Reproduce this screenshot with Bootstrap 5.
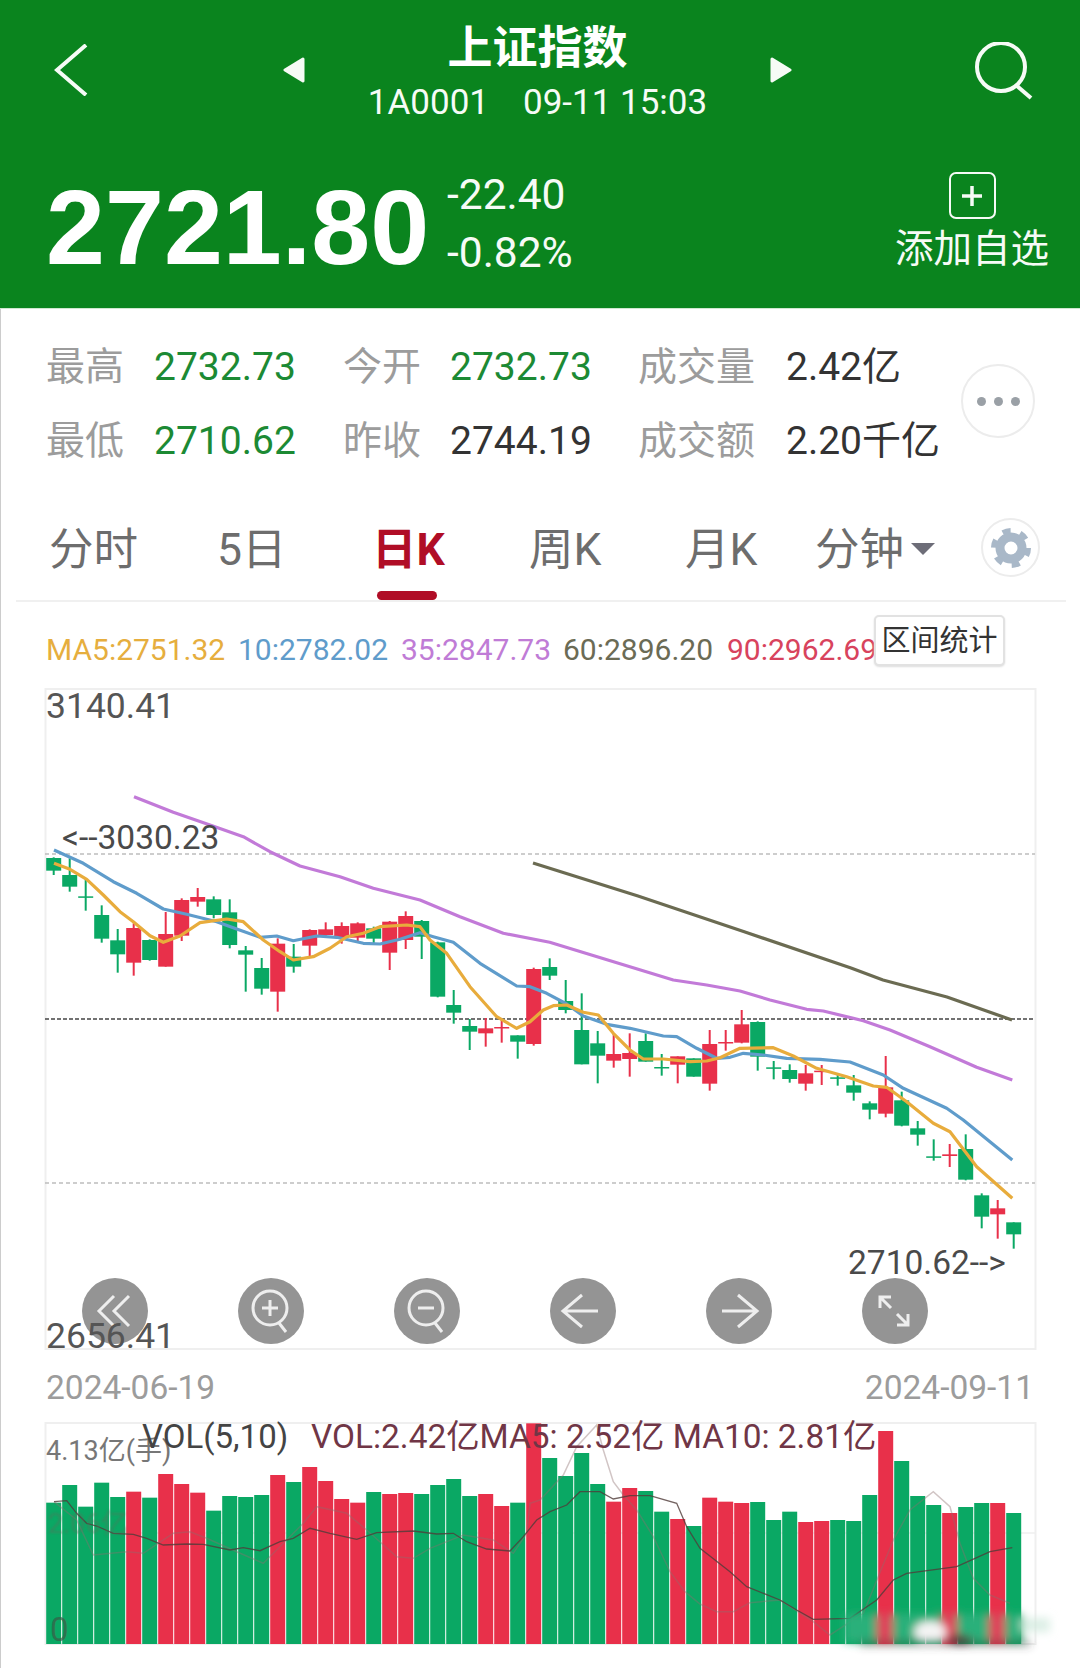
<!DOCTYPE html>
<html lang="zh-CN">
<head>
  <meta charset="UTF-8">
  <meta name="viewport" content="width=device-width, initial-scale=1.0">
  <title>上证指数</title>
  <link href="https://cdn.jsdelivr.net/npm/bootstrap@5.3.3/dist/css/bootstrap.min.css" rel="stylesheet">
  <script src="https://cdn.jsdelivr.net/npm/bootstrap@5.3.3/dist/js/bootstrap.bundle.min.js"></script>
  <style>
    html, body { height: 1668px; overflow: hidden; }
    body { font-family: Roboto, "Noto Sans CJK SC", sans-serif; background: #fff; color: #333; }
    .stock-head { height: 309px; background: #0a841e; color: #f6fbf6; border-bottom: 1px solid #cfe8d0; }
    .head-top { height: 130px; padding-left: 54px; }
    .back-icon { margin-top: 44px; }
    .head-title { width: 511px; margin-left: 190px; }
    .tri-icon { margin-top: 57px; }
    .search-icon { margin: 42px 0 0 182px; }
    .title-main { font-size: 45px; font-weight: 700; line-height: 50px; margin-top: 24px; color: #fff; }
    .title-sub { font-size: 35px; line-height: 40px; margin-top: 9px; }
    .title-sub span + span { margin-left: 34px; }
    .head-price { padding: 45px 30px 0 46px; }
    .big-price { font-family: "Liberation Sans", sans-serif; font-size: 106px; font-weight: 700; line-height: 110px; width: 401px; margin-top: -3px; color: #fff; }
    .price-change { font-size: 42.5px; line-height: 58px; margin-top: -9px; }
    .add-fav { width: 156px; font-size: 38.5px; line-height: 44px; margin-top: -3px; }
    .add-box { width: 47px; height: 47px; border: 2px solid #f6fbf6; border-radius: 7px; margin-bottom: 8px; }
    .body-wrap { border-left: 1px solid #ccc; height: 1359px; }
    .stat-panel { height: 171px; padding: 21px 0 0 45px; }
    .stat-grid { display: grid; grid-template-columns: 108px 189px 107px 188px 148px auto; grid-auto-rows: 74px; align-items: center; font-size: 39px; white-space: nowrap; }
    .stat-label { color: #9c9c9c; }
    .stat-up { color: #1c8a34; }
    .stat-dark { color: #333; }
    .more-btn { width: 74px; height: 74px; top: 55px; right: 45px; border: 2px solid #ececec; }
    .more-btn i { width: 9px; height: 9px; background: #9aa0a6; }
    .tab-strip { height: 122px; margin: 0 14px 0 15px; border-bottom: 2px solid #f0f0f0; }
    .tab-grid { display: grid; grid-template-columns: 168px 155px 157px 156px 130px 1fr; padding: 43px 0 0 33px; font-size: 44.5px; line-height: 54px; color: #6d6d6d; }
    .tab-on { color: #b00d26; font-weight: 700; }
    .tab-on::after { content: ""; position: absolute; left: 5px; top: 68px; width: 60px; height: 9px; border-radius: 5px; background: #b00d26; }
    .tab-drop { display: inline-block; margin: 0 0 9px 7px; border-left: 12px solid transparent; border-right: 12px solid transparent; border-top: 12px solid #6d6d78; vertical-align: middle; }
    .gear-btn { width: 59px; height: 59px; top: 38px; right: 26px; border: 2px solid #ececec; }
    .ma-row { height: 78px; padding-left: 45px; font-size: 30px; line-height: 36px; }
    .ma-line { padding-top: 30px; white-space: nowrap; width: 829px; overflow: hidden; }
    .ma-line span { display: inline-block; }
    .ma-a { color: #e6ae3e; width: 192px; }
    .ma-b { color: #5f9ccb; width: 163px; }
    .ma-c { color: #c07cd6; width: 162px; }
    .ma-d { color: #6b6b55; width: 164px; }
    .ma-e { color: #d8435d; }
    .range-btn { top: 13px; left: 873px; width: 131px; height: 51px; border: 2px solid #e2e2e2; border-radius: 5px; font-size: 29px; line-height: 44px; color: #333; background: #fff; box-shadow: 0 1px 2px #ddd; padding: 0; }
    .chart-wrap { height: 675px; }
    .chart-wrap svg, .vol-wrap svg { display: block; margin-left: -1px; }
    .chart-tag { position: absolute; line-height: 1; white-space: nowrap; color: #4a4a4a; font-size: 33.5px; }
    .tag-max { left: 45px; top: 9px; font-size: 35.5px; color: #555; }
    .tag-high { left: 61px; top: 141px; }
    .tag-low { left: 847px; top: 566px; }
    .tag-min { left: 45px; top: 639px; font-size: 35.5px; color: #555; }
    .zoom-bar { position: absolute; left: 81px; top: 598px; width: 846px; }
    .zoom-btn { width: 66px; height: 66px; padding: 0; border: 0; background: #949494; }
    .date-row { height: 60px; padding: 15px 46px 0 45px; font-size: 33.5px; line-height: 36px; color: #9c9c9c; }
    .vol-wrap { height: 253px; }
    .vol-name { left: 141px; top: 5px; font-size: 33px; color: #444; }
    .vol-val { left: 310px; top: 5px; font-size: 33.4px; color: #703646; }
    .vol-max { left: 45px; top: 23px; font-size: 27px; color: #777; }
    .vol-mid { left: 47px; top: 96px; font-size: 27px; color: rgba(90,110,90,.45); filter: blur(1px); }
    .vol-zero { left: 49px; top: 198px; font-size: 33px; color: rgba(60,90,70,.7); }
  </style>
</head>
<body>
  <div class="stock-head">
    <div class="head-top d-flex align-items-start">
      <svg class="back-icon" width="38" height="52" viewBox="0 0 38 52" fill="none" stroke="#f6fbf6" stroke-width="4"><path d="M32 1 L3 26 L32 51"/></svg>
      <div class="head-title d-flex justify-content-between">
        <svg class="tri-icon" width="24" height="26" viewBox="0 0 24 26"><path d="M21 2 L3 13 L21 24 Z" fill="#f6fbf6" stroke="#f6fbf6" stroke-width="3" stroke-linejoin="round"/></svg>
        <div class="text-center">
          <div class="title-main">上证指数</div>
          <div class="title-sub"><span>1A0001</span><span>09-11 15:03</span></div>
        </div>
        <svg class="tri-icon" width="24" height="26" viewBox="0 0 24 26"><path d="M3 2 L21 13 L3 24 Z" fill="#f6fbf6" stroke="#f6fbf6" stroke-width="3" stroke-linejoin="round"/></svg>
      </div>
      <svg class="search-icon" width="60" height="60" viewBox="0 0 60 60" fill="none" stroke="#f6fbf6" stroke-width="4"><circle cx="26" cy="25" r="24"/><path d="M42 44 L56 56"/></svg>
    </div>
    <div class="head-price d-flex align-items-start">
      <div class="big-price">2721.80</div>
      <div class="price-change flex-grow-1">
        <div>-22.40</div>
        <div>-0.82%</div>
      </div>
      <div class="add-fav d-flex flex-column align-items-center">
        <div class="add-box d-flex align-items-center justify-content-center">
          <svg width="24" height="24" viewBox="0 0 24 24" stroke="#f6fbf6" stroke-width="3.5"><path d="M12 2 V22 M2 12 H22"/></svg>
        </div>
        <div>添加自选</div>
      </div>
    </div>
  </div>

  <div class="body-wrap">
    <div class="stat-panel position-relative">
      <div class="stat-grid">
        <span class="stat-label">最高</span><span class="stat-up">2732.73</span>
        <span class="stat-label">今开</span><span class="stat-up">2732.73</span>
        <span class="stat-label">成交量</span><span class="stat-dark">2.42亿</span>
        <span class="stat-label">最低</span><span class="stat-up">2710.62</span>
        <span class="stat-label">昨收</span><span class="stat-dark">2744.19</span>
        <span class="stat-label">成交额</span><span class="stat-dark">2.20千亿</span>
      </div>
      <div class="more-btn position-absolute rounded-circle d-flex align-items-center justify-content-center gap-2">
        <i class="rounded-circle"></i><i class="rounded-circle"></i><i class="rounded-circle"></i>
      </div>
    </div>

    <div class="tab-strip position-relative">
      <div class="tab-grid">
        <div>分时</div>
        <div>5日</div>
        <div class="tab-on position-relative">日K</div>
        <div>周K</div>
        <div>月K</div>
        <div>分钟<span class="tab-drop"></span></div>
      </div>
      <div class="gear-btn position-absolute rounded-circle d-flex align-items-center justify-content-center">
        <svg width="42" height="42" viewBox="0 0 42 42" fill="none" stroke="#a9b8c8"><circle cx="21" cy="21" r="11" stroke-width="9"/><circle cx="21" cy="21" r="17" stroke-width="6" stroke-dasharray="8 9.8"/></svg>
      </div>
    </div>

    <div class="ma-row position-relative">
      <div class="ma-line">
        <span class="ma-a">MA5:2751.32</span><span class="ma-b">10:2782.02</span><span class="ma-c">35:2847.73</span><span class="ma-d">60:2896.20</span><span class="ma-e">90:2962.69</span>
      </div>
      <button type="button" class="range-btn btn position-absolute">区间统计</button>
    </div>

    <div class="chart-wrap position-relative">
      <svg id="kline" width="1080" height="675" viewBox="0 680 1080 675"></svg>
      <span class="chart-tag tag-max">3140.41</span>
      <span class="chart-tag tag-high">&lt;--3030.23</span>
      <span class="chart-tag tag-low">2710.62--&gt;</span>
      <div class="zoom-bar d-flex justify-content-between" id="zoom-bar"></div>
      <span class="chart-tag tag-min">2656.41</span>
    </div>

    <div class="date-row d-flex justify-content-between">
      <span>2024-06-19</span>
      <span>2024-09-11</span>
    </div>

    <div class="vol-wrap position-relative">
      <svg id="volume" width="1080" height="253" viewBox="0 1415 1080 253"></svg>
      <span class="chart-tag vol-max">4.13亿(手)</span>
      <span class="chart-tag vol-name">VOL(5,10)</span>
      <span class="chart-tag vol-val">VOL:2.42亿MA5: 2.52亿 MA10: 2.81亿</span>
      <span class="chart-tag vol-mid">2.06亿</span>
      <span class="chart-tag vol-zero">0</span>
    </div>
  </div>

  <script>
    const GREEN = '#0aa864', RED = '#e8304a';
    // c, body top, body bottom, wick top, wick bottom (measured from the crops)
    const left = [
      ['G',234,272,232,285],['G',285,320,235,335],['G',349,352,295,392],['G',405,476,376,488],['G',481,523,447,578],
      ['R',444,548,430,587],['G',480,540,478,542],['R',462,560,396,560],['R',360,467,355,483],['R',351,365,324,380],
      ['G',358,405,349,415],['G',397,495,358,505],['G',511,524,498,635],['G',564,626,534,644],['R',491,635,475,695],
      ['G',530,560,492,578],['R',450,497,448,530],['R',448,465,427,470],['R',438,473,427,491],['R',430,473,427,485],
      ['G',445,476,440,490],['R',425,518,423,570],['R',408,480,394,507],['G',423,470,420,537],['G',487,650,485,652],
      ['G',675,698,630,731],['G',738,755,717,810],['R',745,760,714,800],['R',741,745,718,788],['G',766,785,766,836],
      ['R',567,792,563,797],['G',561,587,535,600]
    ];
    const right = [
      ['G',63,90,0,100],['G',150,253,40,253],['G',190,227,153,310],['R',222,242,160,263],['R',219,237,160,290],
      ['G',183,245,160,245],['G',261,264,222,287],['R',229,254,229,310],['G',235,290,235,290],['R',192,311,150,332],
      ['R',186,188,150,212],['R',133,188,90,190],['G',126,230,124,272],['G',262,265,243,298],['G',270,297,253,308],
      ['R',280,311,255,332],['R',272,275,255,315],['G',292,295,280,317],['G',316,338,285,362],['G',370,389,364,418],
      ['R',322,401,228,412],['G',361,437,335,439],['G',445,464,423,497],['G',529,532,478,542],['R',523,528,492,561],
      ['G',507,599,463,601],['G',646,710,640,745],['R',685,703,660,776],['G',727,763,727,806]
    ];
    const candles = left.map(c => [c[0], ...c.slice(1).map(v => 780 + v / 3)])
      .concat(right.map(c => [c[0], ...c.slice(1).map(v => 980 + v / 3)]));
    const volTops = [308,255,320,248,291,275,293,222,252,278,332,288,291,285,225,246,201,243,297,308,276,282,279,282,255,237,288,282,318,308,70,174,
      228,159,252,305,264,273,335,357,378,293,305,309,306,360,335,366,363,360,363,285,93,183,288,315,339,321,309,309,339];
    const barX = i => 53.7 + i * 16;

    const toPts = (a, b) => a.map(p => (30 + p[0] / 3).toFixed(1) + ',' + (780 + p[1] / 3).toFixed(1))
      .concat(b.map(p => (530 + p[0] / 3).toFixed(1) + ',' + (980 + p[1] / 3).toFixed(1))).join(' ');
    const blue = toPts([[72,210],[160,250],[250,305],[320,340],[400,387],[470,403],[560,425],[620,447],[690,472],[740,468],[790,482],[860,468],[920,472],[1000,490],[1050,492],[1110,478],[1170,458],[1210,470],[1270,487],[1350,550],[1460,618]],
      [[0,20],[50,40],[110,72],[160,108],[230,133],[300,145],[400,168],[440,170],[500,205],[560,235],[600,232],[640,220],[700,225],[770,235],[870,238],[960,246],[1060,285],[1120,325],[1250,385],[1300,420],[1447,540]]);
    const orange = toPts([[72,250],[120,268],[170,298],[220,345],[270,395],[310,425],[360,467],[400,487],[450,468],[510,428],[590,417],[640,425],[700,480],[750,515],[790,540],[850,530],[900,505],[950,470],[1000,460],[1050,440],[1130,435],[1170,440],[1200,480],[1250,520],[1320,620],[1400,710],[1460,745]],
      [[0,125],[40,90],[70,77],[110,75],[160,97],[205,105],[250,160],[300,210],[340,237],[400,237],[480,245],[530,243],[570,233],[630,205],[730,203],[790,228],[860,265],[950,290],[1030,318],[1070,322],[1130,365],[1210,430],[1260,455],[1340,560],[1447,655]]);
    const purple = toPts([[312,50],[430,97],[540,135],[640,170],[720,215],[810,258],[930,290],[1030,325],[1170,360],[1290,410],[1420,460],[1559,487]],
      [[430,0],[530,15],[630,33],[720,60],[830,88],[880,93],[1000,122],[1080,150],[1200,200],[1340,262],[1447,300]]);
    const olive = '533,863 638,896 745,932 851,968 883,980 947,997 1012,1020';

    let k = '';
    k += '<path d="M45.5 689 H1035.5 V1349 H45.5 Z" fill="none" stroke="#efefef" stroke-width="2"/>';
    k += '<path d="M45 854 H1035 M45 1183 H1035" stroke="#bdbdbd" stroke-width="1.5" stroke-dasharray="4 3"/>';
    k += '<path d="M45 1019 H1035" stroke="#444" stroke-width="1.5" stroke-dasharray="4 2"/>';
    candles.forEach((c, i) => {
      const x = barX(i), col = c[0] === 'G' ? GREEN : RED;
      k += `<path d="M${x} ${c[3]} V${c[4]}" stroke="${col}" stroke-width="2"/>`;
      k += `<rect x="${x - 7.5}" y="${c[1]}" width="15" height="${Math.max(c[2] - c[1], 1.5)}" fill="${col}"/>`;
    });
    [[purple, '#c27ad8'], [olive, '#6b6b52'], [blue, '#5f9ccb'], [orange, '#e8ac3c']].forEach(l => {
      k += `<polyline points="${l[0]}" fill="none" stroke="${l[1]}" stroke-width="3.2" stroke-linejoin="round"/>`;
    });
    document.getElementById('kline').innerHTML = k;

    const toVol = (a, b) => a.map(p => (30 + p[0] / 3).toFixed(1) + ',' + (1400 + p[1] / 3).toFixed(1))
      .concat(b.map(p => (530 + p[0] / 3).toFixed(1) + ',' + (1400 + p[1] / 3).toFixed(1))).join(' ');
    const volDark = toVol([[72,305],[110,302],[140,340],[170,370],[200,378],[250,400],[310,403],[350,415],[400,435],[470,432],[520,433],[600,450],[640,443],[690,452],[750,425],[790,415],[840,385],[900,400],[980,418],[1040,398],[1150,393],[1220,402],[1270,400],[1310,425],[1370,447],[1440,453],[1480,410]],
      [[0,385],[20,360],[60,335],[110,315],[150,275],[210,275],[250,297],[300,287],[360,287],[440,310],[470,380],[510,445],[600,515],[650,560],[750,600],[800,630],[850,658],[960,655],[1040,600],[1090,540],[1130,520],[1280,500],[1380,455],[1447,443]]);
    const volFaint = toVol([[72,305],[140,360],[190,465],[290,455],[340,460],[430,400],[480,395],[530,415],[620,455],[700,490],[820,370],[860,320],[950,340],[1010,390],[1100,470],[1150,475],[1200,445],[1300,405],[1390,420],[1450,460],[1490,400]],
      [[0,310],[30,300],[100,225],[140,140],[200,75],[220,150],[250,245],[280,285],[320,330],[370,410],[420,515],[465,575],[510,612],[560,635],[610,635],[660,608],[750,600],[850,665],[900,705],[1000,640],[1090,420],[1140,330],[1210,275],[1260,320],[1290,430],[1330,535],[1380,585],[1440,610]]);

    let v = '<defs><filter id="smear" x="-20%" y="-80%" width="140%" height="260%"><feGaussianBlur stdDeviation="4"/></filter></defs>';
    v += '<path d="M45.5 1423 H1035.5 V1644 H45.5 Z" fill="none" stroke="#efefef" stroke-width="2"/>';
    v += '<path d="M45 1533 H1035" stroke="#efefef" stroke-width="1.5"/>';
    volTops.forEach((t, i) => {
      const top = 1400 + t / 3;
      v += `<rect x="${barX(i) - 7.5}" y="${top}" width="15" height="${1644 - top}" fill="${candles[i][0] === 'G' ? GREEN : RED}"/>`;
    });
    v += `<polyline points="${volFaint}" fill="none" stroke="rgba(140,110,110,.4)" stroke-width="1.5"/>`;
    v += `<polyline points="${volDark}" fill="none" stroke="rgba(80,60,58,.8)" stroke-width="1.3"/>`;
    // blurred-out watermark at the bottom right: bars smeared, a few pale and dark patches
    v += '<g filter="url(#smear)">';
    candles.forEach((c, i) => {
      if (i > 49) v += `<rect x="${barX(i) - 9}" y="1614" width="18" height="28" fill="${c[0] === 'G' ? '#2bb07a' : '#e0405a'}"/>`;
    });
    v += '<rect x="1020" y="1618" width="30" height="14" fill="#cfe8dc" opacity=".7"/><ellipse cx="930" cy="1632" rx="16" ry="11" fill="#f4f4f4"/><ellipse cx="960" cy="1640" rx="12" ry="5" fill="#553a3a"/><rect x="860" y="1640" width="170" height="6" fill="#444" opacity=".5"/></g>';
    document.getElementById('volume').innerHTML = v;

    const icons = [
      '<path d="M33 18 L18 33 L33 48 M48 18 L33 33 L48 48"/>',
      '<circle cx="33" cy="30" r="17"/><path d="M25 30 H41 M33 22 V38 M42 45 L49 54"/>',
      '<circle cx="33" cy="30" r="17"/><path d="M25 30 H41 M42 45 L49 54"/>',
      '<path d="M33 17 L14 33 L33 49 M14 33 H49"/>',
      '<path d="M33 17 L52 33 L33 49 M52 33 H17"/>',
      '<path d="M19 30 V19 H30 M19 19 L30 30 M47 36 V47 H36 M47 47 L36 36"/>'
    ];
    document.getElementById('zoom-bar').innerHTML = icons.map(d =>
      `<button type="button" class="zoom-btn btn rounded-circle"><svg width="66" height="66" viewBox="0 0 66 66" fill="none" stroke="#eee" stroke-width="3">${d}</svg></button>`).join('');
  </script>
</body>
</html>
